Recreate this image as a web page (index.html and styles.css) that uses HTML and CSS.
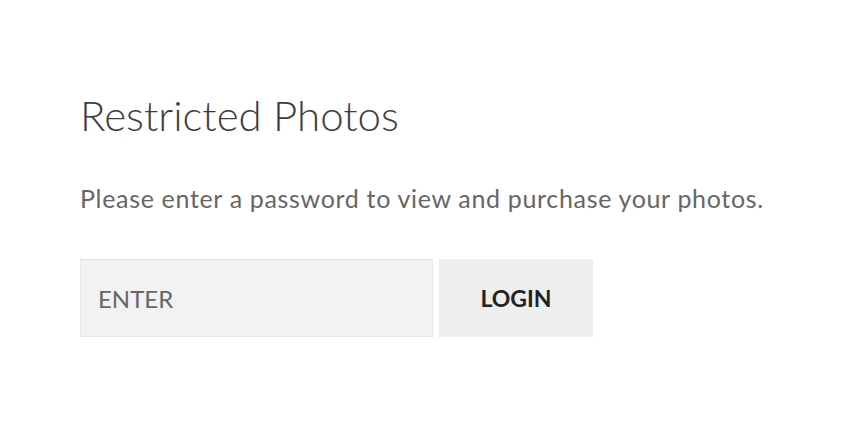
FILE: index.html
```html
<!DOCTYPE html>
<html>
<head>
<meta charset="utf-8">
<link rel="stylesheet" href="styles.css">
</head>
<body>
<main class="page">
  <h1 class="title">Restricted Photos</h1>
  <p class="lead">Please enter a password to view and purchase your photos.</p>
  <form class="login">
    <input class="field" type="password" placeholder="ENTER">
    <button class="btn" type="button">LOGIN</button>
  </form>
</main>
</body>
</html>
```
FILE: styles.css
```css
html, body {
  margin: 0;
  padding: 0;
  background: #fff;
}
.page {
  padding: 85px 0 0 80px;
  font-family: Lato, "Liberation Sans", sans-serif;
}
.title {
  margin: 0;
  font-weight: 300;
  font-size: 42px;
  line-height: 60px;
  color: #3d3d3d;
}
.lead {
  margin: 38px 0 0;
  font-size: 25px;
  line-height: 30px;
  letter-spacing: 0.67px;
  color: #666;
}
.login {
  display: flex;
  gap: 6px;
  margin-top: 46px;
}
.field {
  box-sizing: border-box;
  width: 353px;
  height: 78px;
  border: 1px solid #e8e8e8;
  border-top-color: #e0e0e0;
  background: #f2f2f2;
  padding: 0 0 0 17px;
  font-family: Lato, "Liberation Sans", sans-serif;
  font-size: 24px;
  color: #666;
  outline: none;
}
.field::placeholder {
  color: #666;
}
.btn {
  box-sizing: border-box;
  width: 154px;
  height: 78px;
  border: 0;
  background: #eeeeee;
  font-family: Lato, "Liberation Sans", sans-serif;
  font-weight: 700;
  font-size: 23px;
  color: #222;
  padding: 0;
}
```
